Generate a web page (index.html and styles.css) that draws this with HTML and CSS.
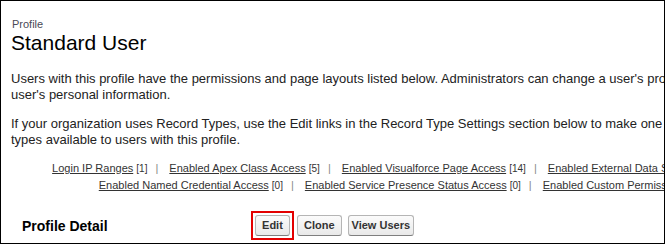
FILE: index.html
```html
<!DOCTYPE html>
<html lang="en">
<head>
    <meta charset="UTF-8">
    <meta name="viewport" content="width=device-width, initial-scale=1.0">
    <title>Profile: Standard User</title>
    <link rel="stylesheet" href="styles.css">
</head>
<body>
    <div class="frame">
        <div class="content">
            <div class="page-header">
                <div class="page-type">Profile</div>
                <h1 class="page-title">Standard User</h1>
            </div>

            <p class="intro">Users with this profile have the permissions and page layouts listed below. Administrators can change a user's profile by editing that user's personal information.</p>
            <p class="intro">If your organization uses Record Types, use the Edit links in the Record Type Settings section below to make one or more record types available to users with this profile.</p>

            <div class="related-links">
                <div class="links-row">
                    <a href="#">Login IP Ranges</a> <span class="count">[1]</span><span class="sep">|</span>
                    <a href="#">Enabled Apex Class Access</a> <span class="count">[5]</span><span class="sep">|</span>
                    <a href="#">Enabled Visualforce Page Access</a> <span class="count">[14]</span><span class="sep">|</span>
                    <a href="#">Enabled External Data Source Access</a> <span class="count">[0]</span>
                </div>
                <div class="links-row">
                    <a href="#">Enabled Named Credential Access</a> <span class="count">[0]</span><span class="sep">|</span>
                    <a href="#">Enabled Service Presence Status Access</a> <span class="count">[0]</span><span class="sep">|</span>
                    <a href="#">Enabled Custom Permissions</a> <span class="count">[0]</span>
                </div>
            </div>

            <div class="block-header">
                <h2 class="block-title">Profile Detail</h2>
                <div class="block-buttons">
                    <span class="highlight"><input type="button" class="btn" value=" Edit "></span>
                    <input type="button" class="btn" value=" Clone ">
                    <input type="button" class="btn" value="View Users">
                </div>
            </div>
        </div>
    </div>
</body>
</html>
```

FILE: styles.css
```css
body {
    margin: 0;
    background-color: #fff;
    font-family: "Liberation Sans", Arial, sans-serif;
    color: #222;
}

.frame {
    width: 665px;
    height: 244px;
    box-sizing: border-box;
    border: 1px solid #000;
    overflow: hidden;
}

.content {
    width: 770px;
    padding: 0 0 0 10px;
}

.page-header {
    padding-top: 17px;
}

.page-type {
    font-size: 11px;
    line-height: 13px;
    color: #4a4a56;
    padding-left: 1px;
}

.page-title {
    margin: 0;
    font-size: 21px;
    font-weight: normal;
    line-height: 24px;
    color: #000;
}

.intro {
    margin: 16px 0 0;
    font-size: 13px;
    line-height: 16px;
    color: #222;
}

.intro + .intro {
    margin-top: 13px;
}

.related-links {
    margin-top: 12px;
    margin-right: -8px;
    text-align: center;
    font-size: 11px;
    line-height: 17px;
    color: #333;
    white-space: nowrap;
}

.related-links a {
    color: #333;
    text-decoration: underline;
}

.count {
    font-size: 10px;
}

.sep {
    color: #888;
    margin: 0 8px;
}

.block-header {
    display: flex;
    align-items: center;
    margin-top: 17px;
}

.block-title {
    width: 229px;
    margin: 0;
    padding-left: 11px;
    font-size: 14px;
    font-weight: bold;
    color: #000;
}

.block-buttons {
    display: flex;
    align-items: center;
    gap: 6px;
}

.highlight {
    display: flex;
    padding: 2px;
    margin-right: -3px;
    border: 2px solid #e30000;
}

.btn {
    font-family: "Liberation Sans", Arial, sans-serif;
    font-size: 11px;
    font-weight: bold;
    line-height: 13px;
    color: #333;
    padding: 3px 3px;
    margin: 0;
    border: 1px solid #b5b5b5;
    border-bottom-color: #7f7f7f;
    border-radius: 3px;
    background: linear-gradient(#fbfbfb, #e9e9e9);
    cursor: pointer;
}
```
